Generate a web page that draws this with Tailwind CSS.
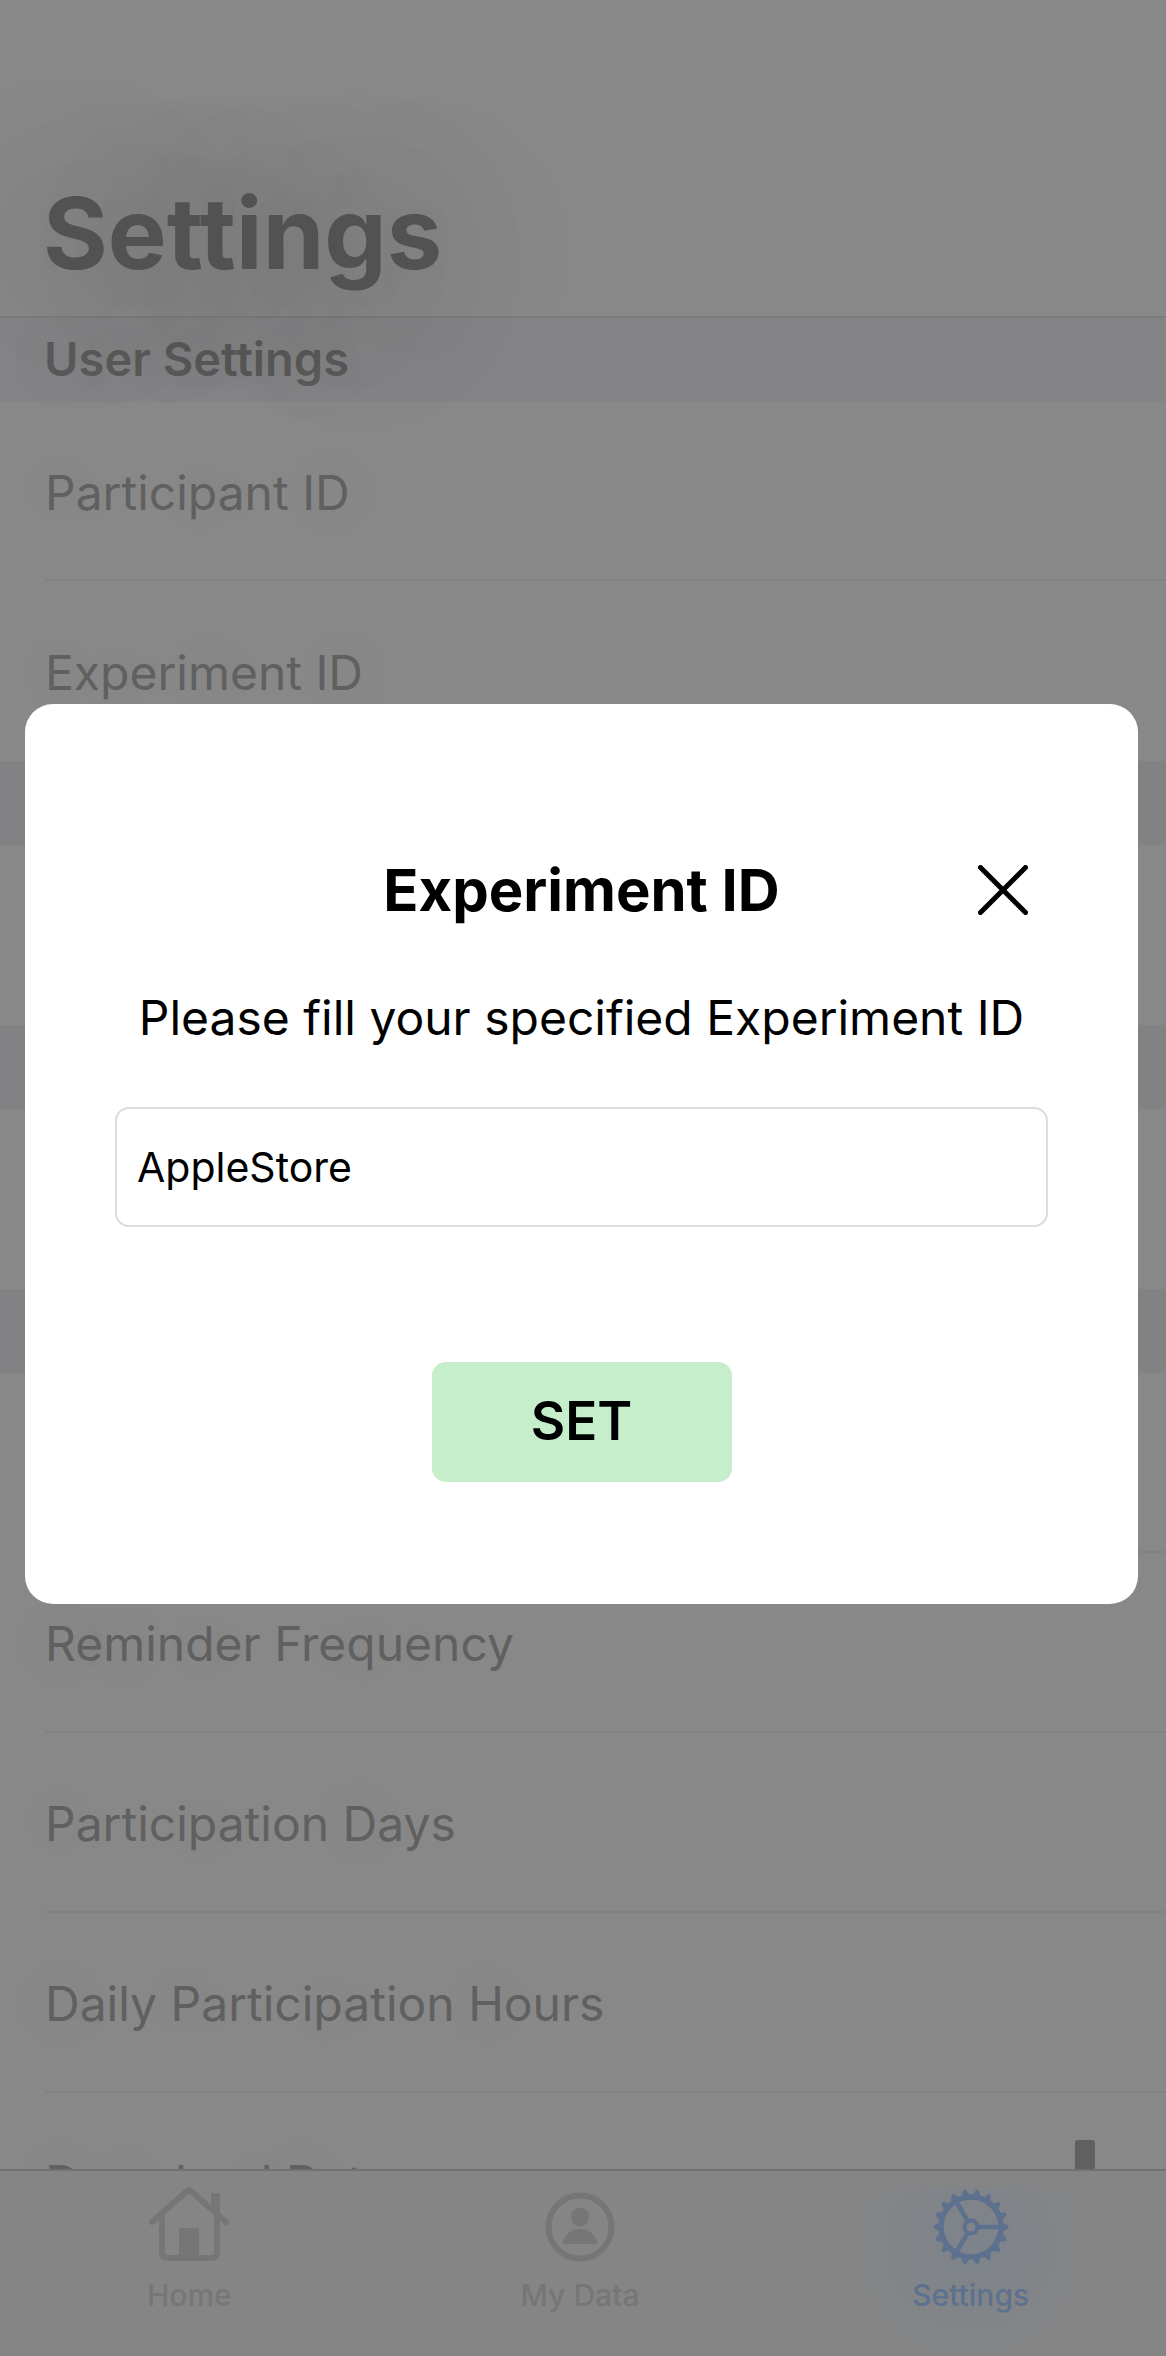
<!DOCTYPE html>
<html lang="en">
<head>
<meta charset="utf-8">
<meta name="viewport" content="width=device-width, initial-scale=1">
<title>Settings</title>
<script src="https://cdn.jsdelivr.net/npm/@tailwindcss/browser@4"></script>
</head>
<body class="flex h-screen flex-col overflow-hidden bg-[#888888] font-['Inter','Liberation_Sans',sans-serif] text-[#606060]">

<header class="relative z-10 flex h-[318px] shrink-0 items-end border-b-2 border-[#7c7c7d] px-[43px] pb-[23px]">
  <h1 class="text-[99px] leading-[120px] font-bold text-[#525252] [text-shadow:0_10px_150px_rgb(0_0_0/0.4)]">Settings</h1>
</header>

<!-- Settings list -->
<main class="flex min-h-0 flex-1 flex-col overflow-hidden text-[48px] leading-[60px] [text-shadow:0_0_90px_rgb(0_0_0/0.15)]">
  <h2 class="h-[84px] shrink-0 bg-[#848486] px-[44px] pt-[11px] text-[47px] font-semibold text-[#5a5a5a]">User Settings</h2>
  <div class="ml-[45px] flex h-[179px] shrink-0 items-center border-b-2 border-[#828282] pt-[4px]">Participant ID</div>
  <div class="ml-[45px] flex h-[180px] shrink-0 items-center pt-[4px]">Experiment ID</div>
  <div class="h-[84px] shrink-0 bg-[#828284]"></div>
  <div class="h-[180px] shrink-0"></div>
  <div class="h-[84px] shrink-0 bg-[#828284]"></div>
  <div class="h-[180px] shrink-0"></div>
  <div class="h-[84px] shrink-0 bg-[#828284]"></div>
  <div class="ml-[45px] h-[180px] shrink-0 border-b-2 border-[#828282]"></div>
  <div class="ml-[45px] flex h-[180px] shrink-0 items-center border-b-2 border-[#828282] pt-[4px]">Reminder Frequency</div>
  <div class="ml-[45px] flex h-[180px] shrink-0 items-center border-b-2 border-[#828282] pt-[4px]">Participation Days</div>
  <div class="ml-[45px] flex h-[180px] shrink-0 items-center border-b-2 border-[#828282] pt-[4px]">Daily Participation Hours</div>
  <div class="ml-[45px] flex h-[180px] shrink-0 items-center justify-between pr-[38px]">
    Download Data
    <svg class="size-[86px]" viewBox="0 0 86 86" fill="currentColor" aria-hidden="true"><path d="M36 0h14q3 0 3 3v34h17L43 64 16 37h17V3q0-3 3-3zM6 58h10v18h54V58h10v28H6z"/></svg>
  </div>
</main>

<!-- Tab bar -->
<nav class="-ml-1.5 flex h-[187px] shrink-0 border-t-2 border-[#717172] bg-[#858585] pt-[16px] text-[30px] leading-[36px] font-medium text-[#767676]">
  <a href="#home" class="flex flex-1 flex-col items-center gap-[10px]">
    <svg class="size-[80px]" viewBox="0 0 80 80" fill="none" stroke="currentColor" stroke-width="6" stroke-linecap="round" stroke-linejoin="round" aria-hidden="true">
      <path d="M3 35 37.500 4.500Q40 2 42.500 4.500L77 35"/>
      <path d="M13 30v35q0 6 6 6h43q6 0 6-6V30"/>
      <path d="M63 8q0-1 1-1h5q1 0 1 1v21l-7-6z" fill="currentColor" stroke-width="2"/>
      <path d="M32 41h16q2 0 2 2v28H30V43q0-2 2-2z" fill="currentColor" stroke="none"/>
    </svg>
    Home
  </a>
  <a href="#data" class="flex flex-1 flex-col items-center gap-[10px]">
    <svg class="size-[80px]" viewBox="0 0 80 80" fill="currentColor" aria-hidden="true">
      <circle cx="40" cy="40" r="31.500" fill="none" stroke="currentColor" stroke-width="6"/>
      <ellipse cx="40" cy="30" rx="9" ry="9.500"/>
      <path d="M25 57q-2 0-2-2c2-8 9-13 17-13s15 5 17 13q0 2-2 2z"/>
    </svg>
    My Data
  </a>
  <a href="#settings" aria-current="page" class="flex flex-1 flex-col items-center gap-[10px] bg-[radial-gradient(circle_at_50%_35%,rgb(95_125_165/0.2)_0px,rgb(95_125_165/0)_130px)] text-[#5d718e]">
    <svg class="size-[80px]" viewBox="-40 -40 80 80" fill="none" stroke="currentColor" aria-hidden="true">
      <defs><path id="tooth" d="M30 -4.500Q34 -3 36 -2.200Q39.500 0 36 2.200Q34 3 30 4.500zM-30 -4.500Q-34 -3 -36 -2.200Q-39.500 0 -36 2.200Q-34 3 -30 4.500z" fill="currentColor" stroke="none"/></defs>
      <circle r="30" stroke-width="5.500"/>
      <circle r="6.500" stroke-width="4"/>
      <path d="M8 0H29M-4 -7-14.500 -25M-4 7-14.500 25" stroke-width="4.500"/>
      <use href="#tooth"/><use href="#tooth" transform="rotate(20)"/><use href="#tooth" transform="rotate(40)"/><use href="#tooth" transform="rotate(60)"/><use href="#tooth" transform="rotate(80)"/><use href="#tooth" transform="rotate(100)"/><use href="#tooth" transform="rotate(120)"/><use href="#tooth" transform="rotate(140)"/><use href="#tooth" transform="rotate(160)"/>
    </svg>
    Settings
  </a>
</nav>

<!-- Dialog -->
<div class="fixed inset-0 z-20 flex items-center pr-[28px] pb-[48px] pl-[25px]">
  <form role="dialog" aria-modal="true" aria-labelledby="dialog-title" class="flex flex-1 flex-col items-center rounded-[28px] bg-white px-[90px] pt-[150px] pb-[122px] text-black">
    <div class="grid w-full grid-cols-[1fr_auto_1fr] items-center">
      <h2 id="dialog-title" class="col-start-2 text-[58px] leading-[72px] font-bold">Experiment ID</h2>
      <button type="button" aria-label="Close" class="mr-[20px] justify-self-end">
        <svg class="size-[50px]" viewBox="0 0 50 50" fill="none" stroke="currentColor" stroke-width="5" stroke-linecap="round" aria-hidden="true"><path d="M2.500 2.500 47.500 47.500M47.500 2.500 2.500 47.500"/></svg>
      </button>
    </div>
    <label for="experiment-id" class="mt-[60px] text-center text-[48px] leading-[64px] whitespace-nowrap">Please fill your specified Experiment ID</label>
    <input id="experiment-id" type="text" value="AppleStore" class="mt-[57px] h-[120px] w-full rounded-[14px] border-2 border-[#dcdcdc] bg-white px-[20px] text-[41px]">
    <button type="submit" class="mt-[135px] h-[120px] w-[300px] rounded-[14px] bg-[#c6eecb] text-[53px] font-semibold">SET</button>
  </form>
</div>
</body>
</html>
